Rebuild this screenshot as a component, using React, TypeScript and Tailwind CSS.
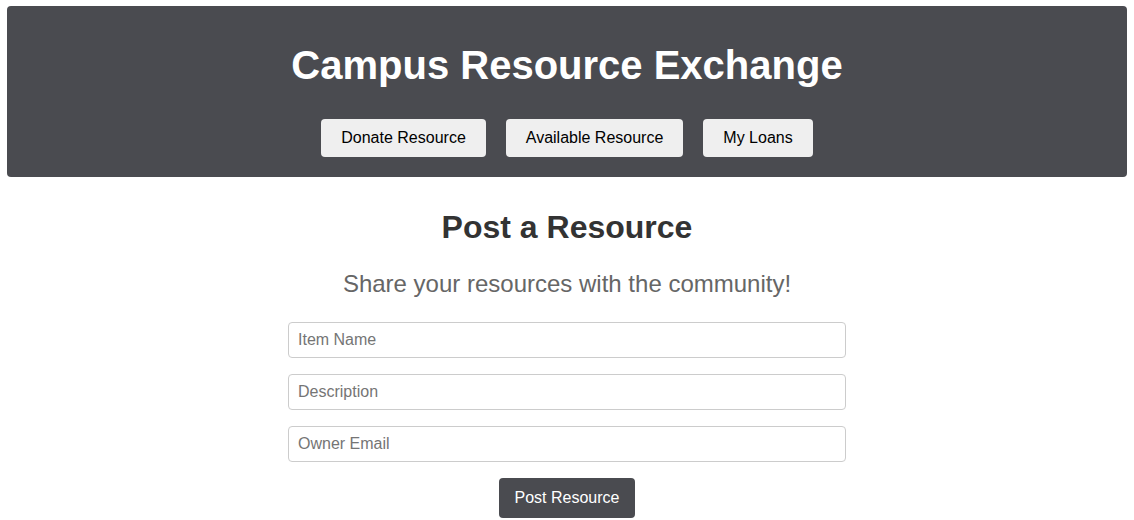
import React from "react";

export default function App() {
  const font = { fontFamily: '"Liberation Sans", Arial, sans-serif' };
  return (
    <div style={font} className="min-h-[520px] bg-white pt-[6px] px-[7px]">
      <header className="bg-[#4a4b50] rounded-[4px] h-[171px] flex flex-col items-center">
        <h1 className="text-white font-bold text-[40px] leading-[46px] mt-[36px]">Campus Resource Exchange</h1>
        <nav className="flex gap-[20px] mt-[31px]">
          <button className="h-[38px] px-[20px] bg-[#efefef] rounded-[4px] text-[16px] text-black">Donate Resource</button>
          <button className="h-[38px] px-[20px] bg-[#efefef] rounded-[4px] text-[16px] text-black">Available Resource</button>
          <button className="h-[38px] px-[20px] bg-[#efefef] rounded-[4px] text-[16px] text-black">My Loans</button>
        </nav>
      </header>
      <main className="flex flex-col items-center">
        <h2 className="text-[#333333] font-bold text-[32px] leading-[37px] mt-[32px]">Post a Resource</h2>
        <p className="text-[#666666] text-[24px] leading-[28px] mt-[24px]">Share your resources with the community!</p>
        <form className="flex flex-col items-center mt-[24px]" onSubmit={(e) => e.preventDefault()}>
          <input placeholder="Item Name" className="w-[558px] h-[36px] border border-[#cccccc] rounded-[4px] px-[9px] text-[16px] placeholder:text-[#757575] outline-none" />
          <input placeholder="Description" className="w-[558px] h-[36px] border border-[#cccccc] rounded-[4px] px-[9px] text-[16px] placeholder:text-[#757575] outline-none mt-[16px]" />
          <input placeholder="Owner Email" className="w-[558px] h-[36px] border border-[#cccccc] rounded-[4px] px-[9px] text-[16px] placeholder:text-[#757575] outline-none mt-[16px]" />
          <button type="submit" className="mt-[16px] h-[40px] w-[136px] bg-[#4a4b50] text-white rounded-[4px] text-[16px]">Post Resource</button>
        </form>
      </main>
    </div>
  );
}
